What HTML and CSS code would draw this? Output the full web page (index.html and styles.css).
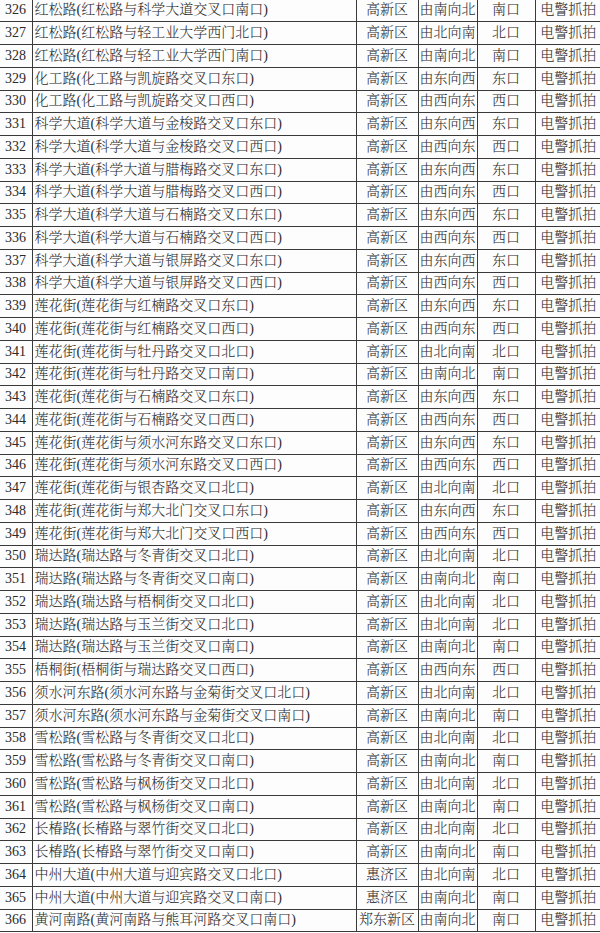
FILE: index.html
```html
<!DOCTYPE html>
<html lang="zh-CN">
<head>
<meta charset="utf-8">
<title>电警抓拍点位表</title>
<link rel="stylesheet" href="styles.css">
</head>
<body>
<table class="grid">
<colgroup>
<col class="c-no"><col class="c-name"><col class="c-area"><col class="c-dir"><col class="c-gate"><col class="c-type">
</colgroup>
<tbody>
<tr><td class="no">326</td><td class="name">红松路(红松路与科学大道交叉口南口)</td><td>高新区</td><td>由南向北</td><td>南口</td><td>电警抓拍</td></tr>
<tr><td class="no">327</td><td class="name">红松路(红松路与轻工业大学西门北口)</td><td>高新区</td><td>由北向南</td><td>北口</td><td>电警抓拍</td></tr>
<tr><td class="no">328</td><td class="name">红松路(红松路与轻工业大学西门南口)</td><td>高新区</td><td>由南向北</td><td>南口</td><td>电警抓拍</td></tr>
<tr><td class="no">329</td><td class="name">化工路(化工路与凯旋路交叉口东口)</td><td>高新区</td><td>由东向西</td><td>东口</td><td>电警抓拍</td></tr>
<tr><td class="no">330</td><td class="name">化工路(化工路与凯旋路交叉口西口)</td><td>高新区</td><td>由西向东</td><td>西口</td><td>电警抓拍</td></tr>
<tr><td class="no">331</td><td class="name">科学大道(科学大道与金梭路交叉口东口)</td><td>高新区</td><td>由东向西</td><td>东口</td><td>电警抓拍</td></tr>
<tr><td class="no">332</td><td class="name">科学大道(科学大道与金梭路交叉口西口)</td><td>高新区</td><td>由西向东</td><td>西口</td><td>电警抓拍</td></tr>
<tr><td class="no">333</td><td class="name">科学大道(科学大道与腊梅路交叉口东口)</td><td>高新区</td><td>由东向西</td><td>东口</td><td>电警抓拍</td></tr>
<tr><td class="no">334</td><td class="name">科学大道(科学大道与腊梅路交叉口西口)</td><td>高新区</td><td>由西向东</td><td>西口</td><td>电警抓拍</td></tr>
<tr><td class="no">335</td><td class="name">科学大道(科学大道与石楠路交叉口东口)</td><td>高新区</td><td>由东向西</td><td>东口</td><td>电警抓拍</td></tr>
<tr><td class="no">336</td><td class="name">科学大道(科学大道与石楠路交叉口西口)</td><td>高新区</td><td>由西向东</td><td>西口</td><td>电警抓拍</td></tr>
<tr><td class="no">337</td><td class="name">科学大道(科学大道与银屏路交叉口东口)</td><td>高新区</td><td>由东向西</td><td>东口</td><td>电警抓拍</td></tr>
<tr><td class="no">338</td><td class="name">科学大道(科学大道与银屏路交叉口西口)</td><td>高新区</td><td>由西向东</td><td>西口</td><td>电警抓拍</td></tr>
<tr><td class="no">339</td><td class="name">莲花街(莲花街与红楠路交叉口东口)</td><td>高新区</td><td>由东向西</td><td>东口</td><td>电警抓拍</td></tr>
<tr><td class="no">340</td><td class="name">莲花街(莲花街与红楠路交叉口西口)</td><td>高新区</td><td>由西向东</td><td>西口</td><td>电警抓拍</td></tr>
<tr><td class="no">341</td><td class="name">莲花街(莲花街与牡丹路交叉口北口)</td><td>高新区</td><td>由北向南</td><td>北口</td><td>电警抓拍</td></tr>
<tr><td class="no">342</td><td class="name">莲花街(莲花街与牡丹路交叉口南口)</td><td>高新区</td><td>由南向北</td><td>南口</td><td>电警抓拍</td></tr>
<tr><td class="no">343</td><td class="name">莲花街(莲花街与石楠路交叉口东口)</td><td>高新区</td><td>由东向西</td><td>东口</td><td>电警抓拍</td></tr>
<tr><td class="no">344</td><td class="name">莲花街(莲花街与石楠路交叉口西口)</td><td>高新区</td><td>由西向东</td><td>西口</td><td>电警抓拍</td></tr>
<tr><td class="no">345</td><td class="name">莲花街(莲花街与须水河东路交叉口东口)</td><td>高新区</td><td>由东向西</td><td>东口</td><td>电警抓拍</td></tr>
<tr><td class="no">346</td><td class="name">莲花街(莲花街与须水河东路交叉口西口)</td><td>高新区</td><td>由西向东</td><td>西口</td><td>电警抓拍</td></tr>
<tr><td class="no">347</td><td class="name">莲花街(莲花街与银杏路交叉口北口)</td><td>高新区</td><td>由北向南</td><td>北口</td><td>电警抓拍</td></tr>
<tr><td class="no">348</td><td class="name">莲花街(莲花街与郑大北门交叉口东口)</td><td>高新区</td><td>由东向西</td><td>东口</td><td>电警抓拍</td></tr>
<tr><td class="no">349</td><td class="name">莲花街(莲花街与郑大北门交叉口西口)</td><td>高新区</td><td>由西向东</td><td>西口</td><td>电警抓拍</td></tr>
<tr><td class="no">350</td><td class="name">瑞达路(瑞达路与冬青街交叉口北口)</td><td>高新区</td><td>由北向南</td><td>北口</td><td>电警抓拍</td></tr>
<tr><td class="no">351</td><td class="name">瑞达路(瑞达路与冬青街交叉口南口)</td><td>高新区</td><td>由南向北</td><td>南口</td><td>电警抓拍</td></tr>
<tr><td class="no">352</td><td class="name">瑞达路(瑞达路与梧桐街交叉口北口)</td><td>高新区</td><td>由北向南</td><td>北口</td><td>电警抓拍</td></tr>
<tr><td class="no">353</td><td class="name">瑞达路(瑞达路与玉兰街交叉口北口)</td><td>高新区</td><td>由北向南</td><td>北口</td><td>电警抓拍</td></tr>
<tr><td class="no">354</td><td class="name">瑞达路(瑞达路与玉兰街交叉口南口)</td><td>高新区</td><td>由南向北</td><td>南口</td><td>电警抓拍</td></tr>
<tr><td class="no">355</td><td class="name">梧桐街(梧桐街与瑞达路交叉口西口)</td><td>高新区</td><td>由西向东</td><td>西口</td><td>电警抓拍</td></tr>
<tr><td class="no">356</td><td class="name">须水河东路(须水河东路与金菊街交叉口北口)</td><td>高新区</td><td>由北向南</td><td>北口</td><td>电警抓拍</td></tr>
<tr><td class="no">357</td><td class="name">须水河东路(须水河东路与金菊街交叉口南口)</td><td>高新区</td><td>由南向北</td><td>南口</td><td>电警抓拍</td></tr>
<tr><td class="no">358</td><td class="name">雪松路(雪松路与冬青街交叉口北口)</td><td>高新区</td><td>由北向南</td><td>北口</td><td>电警抓拍</td></tr>
<tr><td class="no">359</td><td class="name">雪松路(雪松路与冬青街交叉口南口)</td><td>高新区</td><td>由南向北</td><td>南口</td><td>电警抓拍</td></tr>
<tr><td class="no">360</td><td class="name">雪松路(雪松路与枫杨街交叉口北口)</td><td>高新区</td><td>由北向南</td><td>北口</td><td>电警抓拍</td></tr>
<tr><td class="no">361</td><td class="name">雪松路(雪松路与枫杨街交叉口南口)</td><td>高新区</td><td>由南向北</td><td>南口</td><td>电警抓拍</td></tr>
<tr><td class="no">362</td><td class="name">长椿路(长椿路与翠竹街交叉口北口)</td><td>高新区</td><td>由北向南</td><td>北口</td><td>电警抓拍</td></tr>
<tr><td class="no">363</td><td class="name">长椿路(长椿路与翠竹街交叉口南口)</td><td>高新区</td><td>由南向北</td><td>南口</td><td>电警抓拍</td></tr>
<tr><td class="no">364</td><td class="name">中州大道(中州大道与迎宾路交叉口北口)</td><td>惠济区</td><td>由北向南</td><td>北口</td><td>电警抓拍</td></tr>
<tr><td class="no">365</td><td class="name">中州大道(中州大道与迎宾路交叉口南口)</td><td>惠济区</td><td>由南向北</td><td>南口</td><td>电警抓拍</td></tr>
<tr><td class="no">366</td><td class="name">黄河南路(黄河南路与熊耳河路交叉口南口)</td><td>郑东新区</td><td>由南向北</td><td>南口</td><td>电警抓拍</td></tr>
</tbody>
</table>
</body>
</html>
```

FILE: styles.css
```css
html, body {
  margin: 0;
  padding: 0;
  background: #fdfdfd;
  overflow: hidden;
}

.grid {
  border-collapse: collapse;
  table-layout: fixed;
  width: 601px;
  margin-top: -1px;
  font-family: "Liberation Serif", "Noto Serif CJK SC", "Noto Sans CJK SC", serif;
  font-size: 14px;
  font-weight: 300;
  color: #2a2a2a;
}

.c-no { width: 32px; }
.c-name { width: 324px; }
.c-area { width: 62px; }
.c-dir { width: 59px; }
.c-gate { width: 58px; }
.c-type { width: 66px; }

.grid td {
  height: 22.75px;
  padding: 0;
  border-left: 1px solid #3a3a3a;
  border-bottom: 1px solid #3a3a3a;
  text-align: center;
  white-space: nowrap;
  overflow: hidden;
  line-height: 20px;
  box-sizing: border-box;
}

.grid td.no {
  border-left: none;
  text-align: left;
  padding-left: 5px;
}

.grid td.name {
  text-align: left;
  padding-left: 2px;
}
```
